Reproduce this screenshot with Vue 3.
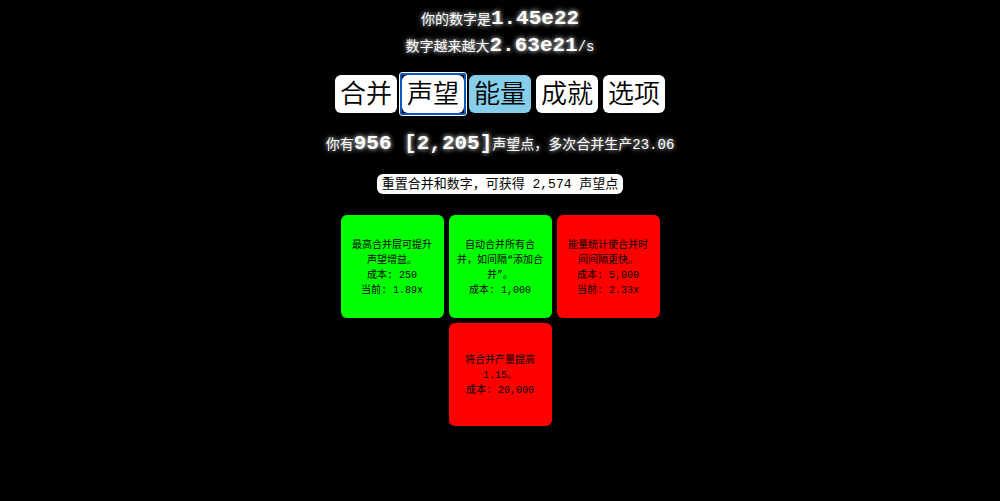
<script setup>
import { ref } from 'vue'

const tabs = ['合并', '声望', '能量', '成就', '选项']
const active = ref('声望')

const upgrades = [
  { text: '最高合并层可提升声望增益。', cost: '250', current: '1.89x', affordable: true },
  { text: '自动合并所有合并，如间隔“添加合并”。', cost: '1,000', affordable: true },
  { text: '能量统计使合并时间间隔更快。', cost: '5,000', current: '2.33x', affordable: false },
  { text: '将合并产量提高1.15。', cost: '20,000', affordable: false }
]
</script>

<template>
  <main class="game">
    <header class="stats">
      <p>你的数字是<b>1.45e22</b></p>
      <p>数字越来越大<b>2.63e21</b>/s</p>
    </header>

    <nav class="tabs">
      <button
        v-for="tab in tabs"
        :key="tab"
        type="button"
        class="tab"
        :class="{ active: tab === active, energy: tab === '能量' }"
        @click="active = tab"
      >{{ tab }}</button>
    </nav>

    <p class="prestige">你有<b>956 [2,205]</b>声望点，多次合并生产23.06</p>

    <button type="button" class="reset">重置合并和数字，可获得 2,574 声望点</button>

    <section class="upgrades">
      <button
        v-for="item in upgrades"
        :key="item.text"
        type="button"
        class="upgrade"
        :class="{ affordable: item.affordable }"
      >
        <span>{{ item.text }}</span>
        <span>成本: {{ item.cost }}</span>
        <span v-if="item.current">当前: {{ item.current }}</span>
      </button>
    </section>
  </main>
</template>

<style>
body {
  background: #000;
}
</style>

<style scoped>
.game {
  display: flex;
  flex-direction: column;
  align-items: center;
  padding: 6px 5px;
  color: #fff;
  font-family: "Liberation Mono", "Noto Sans CJK SC", monospace;
  font-size: 14px;
  line-height: 26px;
  text-align: center;
}

p {
  margin: 0;
  text-shadow: 0 0 5px #fff;
}

b {
  font-size: 21px;
}

button {
  border: 0;
  margin: 0;
  border-radius: 6px;
  color: #000;
  font-family: inherit;
  cursor: pointer;
}

.tabs {
  display: flex;
  flex-wrap: wrap;
  justify-content: center;
  gap: 5px;
  margin-top: 15px;
}

.tab {
  position: relative;
  padding: 5px 5px 0;
  background: #fff;
  font-size: 26px;
  font-weight: 350;
  line-height: 33px;
}

.tab.energy {
  background: #87ceeb;
}

.tab.active::after {
  content: "";
  position: absolute;
  inset: -2px;
  border: 2px solid #0b56c4;
  border-radius: 3px;
  box-shadow: 0 0 0 1px #fff;
}

.prestige {
  margin-top: 18px;
}

.reset {
  margin-top: 16px;
  padding: 2px 5px 0;
  background: #fff;
  font-size: 13px;
  line-height: 18px;
}

.upgrades {
  display: flex;
  flex-wrap: wrap;
  justify-content: center;
  gap: 5px;
  max-width: 320px;
  margin-top: 21px;
}

.upgrade {
  display: flex;
  flex-direction: column;
  justify-content: center;
  width: 103px;
  aspect-ratio: 1;
  padding: 2px 7px 0;
  background: #f00;
  font-size: 10px;
  line-height: 15px;
}

.upgrade.affordable {
  background: #0f0;
}
</style>
